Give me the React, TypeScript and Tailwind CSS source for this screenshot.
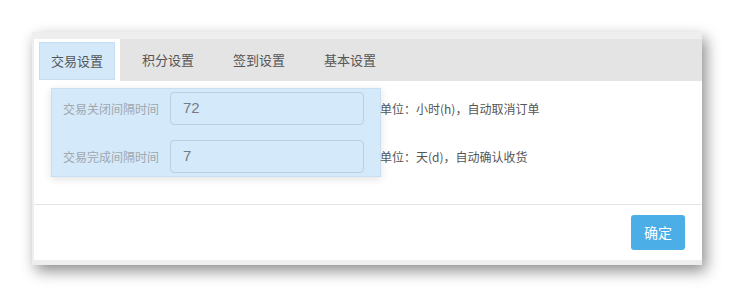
import React from "react";

const font = { fontFamily: '"Microsoft YaHei", "Noto Sans CJK SC", "Noto Sans", sans-serif' };

export default function App() {
  const tabs = ["交易设置", "积分设置", "签到设置", "基本设置"];
  return (
    <div className="w-[734px] h-[297px] bg-white pl-[32px] pt-[32px]" style={font}>
      <div className="w-[670px] h-[233px] bg-[#eeeeee] pt-[7px] pl-[2px] pb-[5px] flex flex-col shadow-[4px_6px_14px_rgba(0,0,0,0.45)]">
        <div className="flex-1 bg-white flex flex-col">
          <div className="h-[42px] bg-[#e4e4e4] flex gap-[5px]">
            {tabs.map((t, i) =>
              i === 0 ? (
                <div key={t} className="w-[86px] h-[42px] bg-white pl-[5px] pt-[3px]">
                  <div className="w-[76px] h-[38px] bg-[#d3e8f9] border border-[#c6def3] flex items-center justify-center text-[13px] text-[#555]">
                    {t}
                  </div>
                </div>
              ) : (
                <div key={t} className="w-[86px] h-[42px] flex items-center justify-center text-[13px] text-[#555]">
                  {t}
                </div>
              )
            )}
          </div>
          <div className="h-[124px] pl-[17px] pt-[7px] border-b border-[#e5e5e5]">
            <div className="flex">
              <div className="w-[330px] h-[89px] bg-[#d4e9fa] border border-[#c9e0f4] shadow-[0_2px_8px_rgba(0,0,0,0.12)] flex flex-col gap-[15px] py-[3px]">
                {[
                  ["交易关闭间隔时间", "72"],
                  ["交易完成间隔时间", "7"],
                ].map(([l, v]) => (
                  <div key={l} className="flex items-center h-[33px]">
                    <div className="w-[118px] pl-[11px] text-[12px] text-[#a0a7ad] whitespace-nowrap">{l}</div>
                    <div
                      className="w-[194px] h-[33px] rounded-[4px] border border-[#b9d0e3] flex items-center pl-[12px] text-[15px] text-[#777c82]"
                      style={{ fontFamily: '"Liberation Sans", Arial, sans-serif' }}
                    >
                      {v}
                    </div>
                  </div>
                ))}
              </div>
              <div className="flex flex-col gap-[15px] pt-[4px] -ml-[1px]">
                <div className="h-[33px] flex items-center text-[12px] text-[#555] whitespace-nowrap">单位：小时(h)，自动取消订单</div>
                <div className="h-[33px] flex items-center text-[12px] text-[#555] whitespace-nowrap">单位：天(d)，自动确认收货</div>
              </div>
            </div>
          </div>
          <div className="flex-1 flex justify-end items-start pt-[10px] pr-[17px]">
            <div className="w-[54px] h-[35px] rounded-[3px] bg-[#4caee6] text-white text-[14px] flex items-center justify-center">
              确定
            </div>
          </div>
        </div>
      </div>
    </div>
  );
}
